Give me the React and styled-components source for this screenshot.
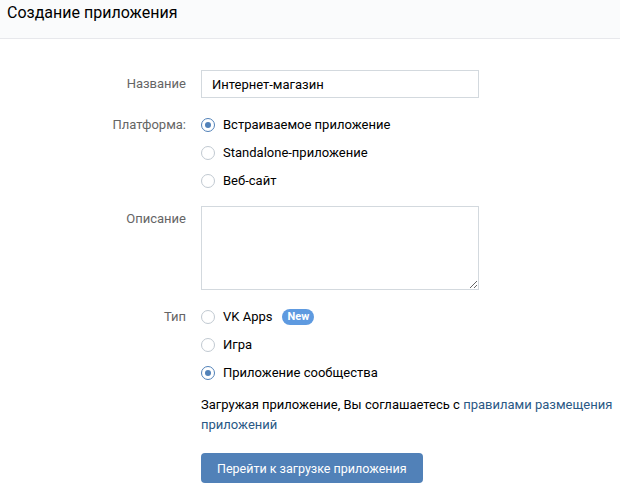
import styled, { createGlobalStyle } from "styled-components";

const GlobalStyle = createGlobalStyle`
  body {
    margin: 0;
    background: #fff;
    font-family: Roboto, "Open Sans", "Liberation Sans", sans-serif;
    font-size: 13px;
    color: #000;
  }
`;

const platforms = [
  { text: "Встраиваемое приложение", checked: true },
  { text: "Standalone-приложение" },
  { text: "Веб-сайт" },
];

const types = [
  { text: "VK Apps", badge: "New" },
  { text: "Игра" },
  { text: "Приложение сообщества", checked: true },
];

export default function App() {
  return (
    <Page>
      <GlobalStyle />
      <Header>Создание приложения</Header>
      <Form>
        <Row>
          <Label>Название</Label>
          <Field>
            <Input type="text" defaultValue="Интернет-магазин" />
          </Field>
        </Row>
        <Row $gap={13}>
          <Label>Платформа:</Label>
          <Field>
            {platforms.map((p) => (
              <Radio key={p.text}>
                <Circle $checked={p.checked} />
                <span>{p.text}</span>
              </Radio>
            ))}
          </Field>
        </Row>
        <Row $gap={11}>
          <Label $top>Описание</Label>
          <Field>
            <Textarea />
          </Field>
        </Row>
        <Row $gap={13}>
          <Label>Тип</Label>
          <Field>
            {types.map((t) => (
              <Radio key={t.text}>
                <Circle $checked={t.checked} />
                <span>{t.text}</span>
                {t.badge && <Badge>{t.badge}</Badge>}
              </Radio>
            ))}
          </Field>
        </Row>
        <Row $gap={8}>
          <Label />
          <Field>
            <Terms>
              Загружая приложение, Вы соглашаетесь с{" "}
              <a href="#">правилами размещения приложений</a>
            </Terms>
            <Button type="button">Перейти к загрузке приложения</Button>
          </Field>
        </Row>
      </Form>
    </Page>
  );
}

const Page = styled.div`
  width: 620px;
  min-height: 493px;
`;

const Header = styled.div`
  height: 39px;
  box-sizing: border-box;
  padding: 3px 7px 0;
  font-size: 16px;
  line-height: 20px;
  background: #fafbfc;
  border-bottom: 1px solid #e7e8ec;
`;

const Form = styled.div`
  padding: 31px 0 0 0;
`;

const Row = styled.div`
  display: flex;
  margin-top: ${(p) => (p.$gap ? p.$gap : 0)}px;
`;

const Label = styled.div`
  width: 186px;
  flex-shrink: 0;
  padding-right: 15px;
  text-align: right;
  color: #656565;
  line-height: ${(p) => (p.$top ? "18px" : "28px")};
  padding-top: ${(p) => (p.$top ? "4px" : "0")};
`;

const Field = styled.div`
  flex: 1;
  display: flex;
  flex-direction: column;
  align-items: flex-start;
`;

const Input = styled.input`
  width: 278px;
  height: 28px;
  box-sizing: border-box;
  border: 1px solid #d3d9de;
  border-radius: 0;
  padding: 0 10px;
  font-family: inherit;
  font-size: 13px;
  color: #000;
  outline: none;
`;

const Textarea = styled.textarea`
  width: 278px;
  height: 84px;
  box-sizing: border-box;
  border: 1px solid #d3d9de;
  margin: 0;
  padding: 5px 10px;
  font-family: inherit;
  font-size: 13px;
  display: block;
  outline: none;
`;

const Radio = styled.label`
  display: flex;
  align-items: center;
  height: 28px;
  line-height: 28px;
  color: #000;
`;

const Circle = styled.span`
  width: 14px;
  height: 14px;
  box-sizing: border-box;
  border-radius: 50%;
  border: 1px solid ${(p) => (p.$checked ? "#5181b8" : "#c1c9d1")};
  margin-right: 8px;
  display: flex;
  align-items: center;
  justify-content: center;
  &::after {
    content: "";
    width: 6px;
    height: 6px;
    border-radius: 50%;
    background: #5181b8;
    display: ${(p) => (p.$checked ? "block" : "none")};
  }
`;

const Badge = styled.span`
  margin-left: 10px;
  height: 16px;
  padding: 0 5px;
  border-radius: 8px;
  background: #5e9ae0;
  color: #fff;
  font-size: 11px;
  font-weight: 700;
  line-height: 16px;
`;

const Terms = styled.div`
  line-height: 20px;
  color: #000;
  a {
    color: #2a5885;
    text-decoration: none;
  }
`;

const Button = styled.button`
  margin-top: 18px;
  height: 30px;
  padding: 0 16px;
  border: none;
  border-radius: 4px;
  background: #5181b8;
  color: #fff;
  font-family: inherit;
  font-size: 12.5px;
  cursor: pointer;
`;
